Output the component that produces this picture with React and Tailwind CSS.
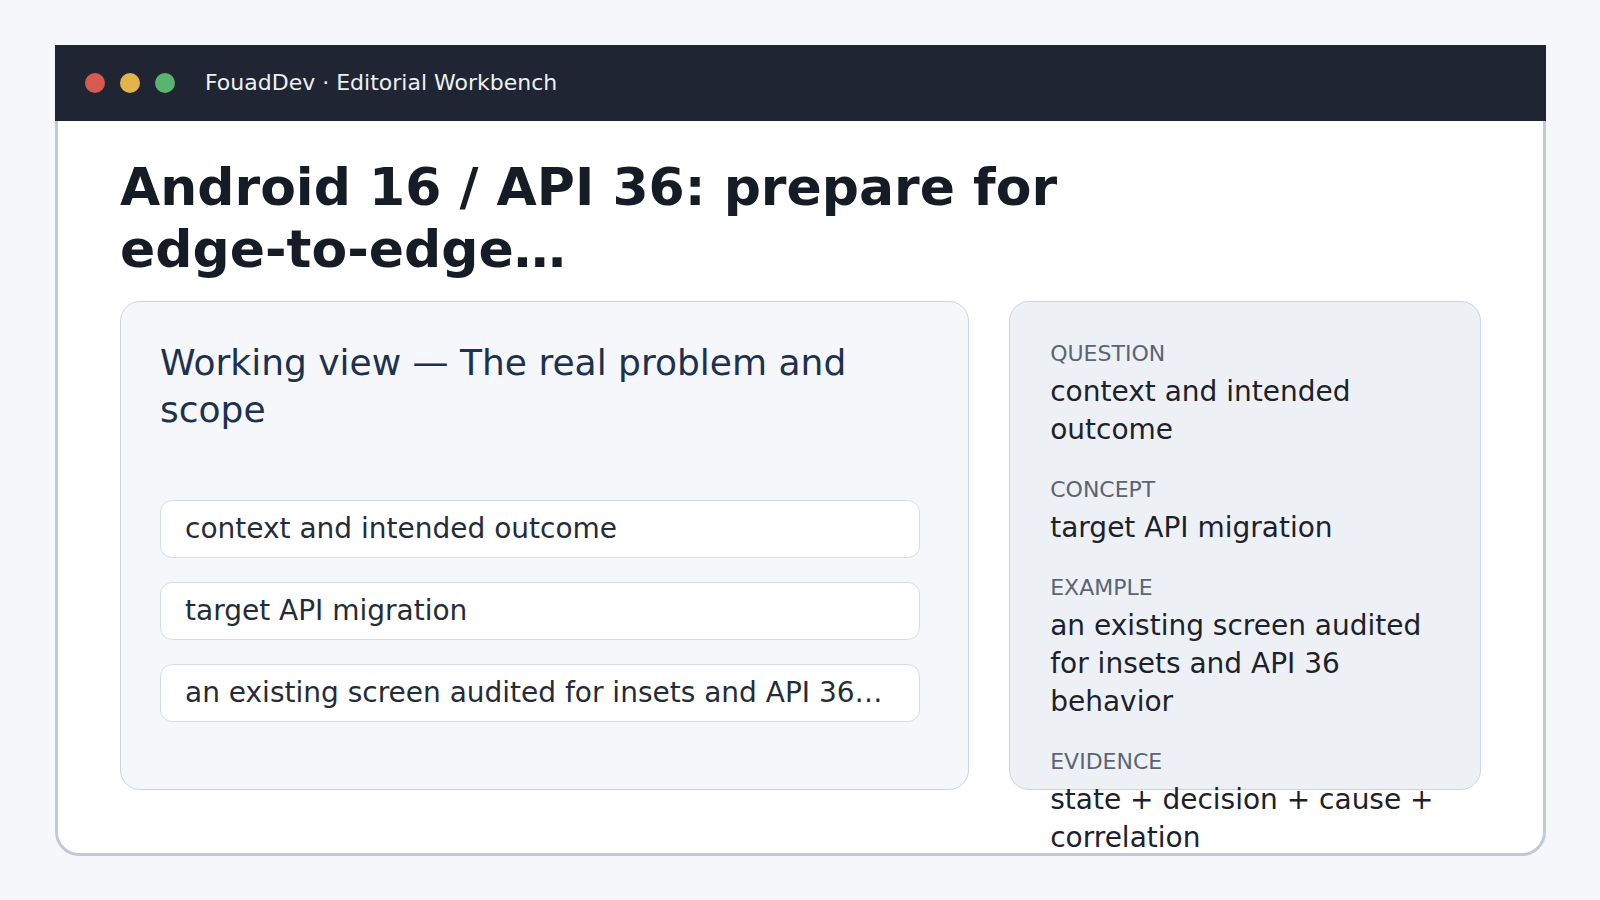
const FONT = "font-['DejaVu_Sans','Liberation_Sans',sans-serif]";

const rows = [
  'context and intended outcome',
  'target API migration',
  'an existing screen audited for insets and API 36…',
];

const notes = [
  { label: 'Question', value: 'context and intended outcome' },
  { label: 'Concept', value: 'target API migration' },
  { label: 'Example', value: 'an existing screen audited for insets and API 36 behavior' },
  { label: 'Evidence', value: 'state + decision + cause + correlation' },
];

export default function App() {
  return (
    <div className={`min-h-screen bg-[#f5f7fa] pl-[55px] pr-[54px] pt-[45px] ${FONT}`}>
      <div className="rounded-b-3xl bg-white">
        {/* Title bar */}
        <div className="flex h-[76px] items-center bg-[#1f2532] pl-[30px]">
          <div className="flex items-center gap-[15px]">
            <span className="h-5 w-5 rounded-full bg-[#d55b50]" />
            <span className="h-5 w-5 rounded-full bg-[#e3b44b]" />
            <span className="h-5 w-5 rounded-full bg-[#59b470]" />
          </div>
          <span className="ml-[30px] text-[22px] leading-none text-[#eef1f5]">
            FouadDev · Editorial Workbench
          </span>
        </div>

        {/* Body */}
        <div className="rounded-b-3xl border-x-[3px] border-b-[3px] border-[#c2c9d5] px-[62px] pb-[63px] pt-[35px]">
          <h1 className="max-w-[1040px] text-[52px] font-bold leading-[1.2] text-[#161c25]">
            Android 16 / API 36: prepare for edge-to-edge…
          </h1>

          <div className="mt-5 grid grid-cols-[1.8fr_1fr] grid-rows-[489px] gap-10">
            {/* Working view */}
            <div className="h-[489px] rounded-[20px] border border-[#cdd4df] bg-[#f5f7fb] pl-[39px] pr-12 pt-[37px]">
              <h2 className="text-[36px] leading-[47px] text-[#1d3150]">
                Working view — The real problem and scope
              </h2>
              <div className="mt-[67px] flex flex-col gap-6">
                {rows.map((r) => (
                  <div
                    key={r}
                    className="truncate rounded-xl border border-[#d5dce7] bg-white px-6 py-[11px] text-[28px] leading-[34px] text-[#242c38]"
                  >
                    {r}
                  </div>
                ))}
              </div>
            </div>

            {/* Notes */}
            <div className="flex h-[489px] flex-col gap-[26.5px] rounded-[20px] border border-[#cdd4df] bg-[#edf0f5] px-10 pt-[37px]">
              {notes.map((n) => (
                <div key={n.label}>
                  <div className="text-[22px] uppercase leading-[30px] text-[#5b6472]">{n.label}</div>
                  <div className="mt-[4px] text-[28px] leading-[37.8px] text-[#1c212b]">{n.value}</div>
                </div>
              ))}
            </div>
          </div>
        </div>
      </div>
    </div>
  );
}
